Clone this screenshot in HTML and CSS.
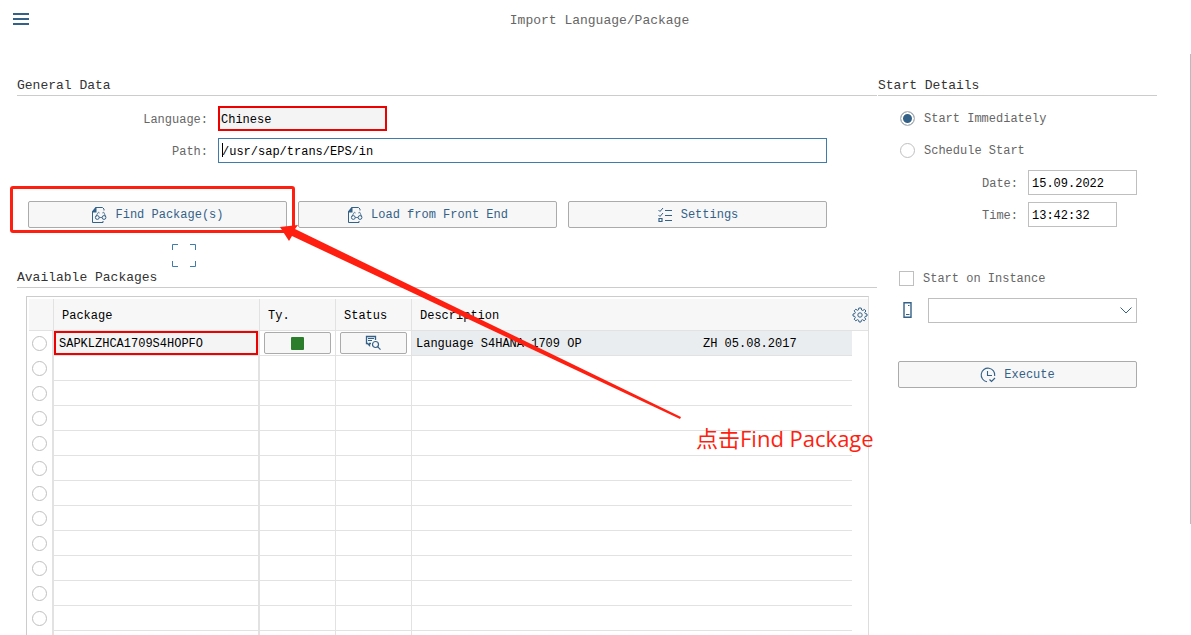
FILE: index.html
```html
<!DOCTYPE html>
<html lang="en">
<head>
<meta charset="utf-8">
<title>Import Language/Package</title>
<link rel="stylesheet" href="styles.css">
</head>
<body>
<svg class="defs" aria-hidden="true">
  <symbol id="doc-find" viewBox="0 0 16 16">
    <path d="M1.500 4.500V15.500H12V14M5 .5H11.500L13 2V3.500" fill="none" stroke="#346187"/>
    <path d="M1 5.500V4.500L4.500 0H5.500V5.500Z" fill="#346187"/>
    <circle cx="6.300" cy="10.500" r="1.900" fill="none" stroke="#346187"/>
    <circle cx="13" cy="10.500" r="1.900" fill="none" stroke="#346187"/>
    <path d="M8.200 10.500H11.100M4.700 9.500L7.500 5.200L8.600 6M14.700 9.500L12.700 5.200L11.300 6" fill="none" stroke="#346187" stroke-width=".8"/>
  </symbol>
</svg>
<header class="topbar">
  <button class="menu" aria-label="Menu"><span></span><span></span><span></span></button>
  <h1>Import Language/Package</h1>
</header>
<main class="content">
  <div class="left">
    <section>
      <h2>General Data</h2>
      <div class="fields">
        <div class="field">
          <label for="lang">Language:</label>
          <input id="lang" class="marked" value="Chinese" readonly>
        </div>
        <div class="field">
          <label for="path">Path:</label>
          <span class="path-box"><input id="path" value="/usr/sap/trans/EPS/in"></span>
        </div>
      </div>
      <div class="actions">
        <div class="callout"><button class="btn"><svg class="icon"><use href="#doc-find"/></svg>Find Package(s)</button></div>
        <button class="btn"><svg class="icon"><use href="#doc-find"/></svg>Load from Front End</button>
        <button class="btn"><svg class="icon" viewBox="0 0 16 16" fill="none" stroke="#346187"><path d="M1.500 3L3 4.500L6 1M1.500 8L3 9.500L6 6" stroke-width="1"/><path d="M2 11.500H5V14.500H2Z" stroke-width="1.200"/><path d="M8 3.500H15M8 8.500H15M8 13.500H15"/></svg>Settings</button>
      </div>
      <svg class="focus" viewBox="0 0 24 23" fill="none" stroke="#3f7cac"><path d="M.5 6V.5H6M18 .5H23.500V6M.5 17V22.500H6M18 22.500H23.500V17"/></svg>
    </section>
    <section class="packages">
      <h2>Available Packages</h2>
      <div class="grid">
        <table>
          <colgroup><col class="c-sel"><col class="c-pkg"><col class="c-btn"><col class="c-btn"><col><col class="c-gear"></colgroup>
          <thead>
            <tr><th></th><th>Package</th><th>Ty.</th><th>Status</th><th>Description</th>
            <th class="gear"><button aria-label="Table settings"><svg viewBox="0 0 16 16" fill="none" stroke="#346187"><path d="M6.800 1H9.200L9.600 3L10.800 3.500L12.500 2.400L13.900 4L12.700 5.500L13.200 6.600L15 7V9L13.200 9.400L12.700 10.600L13.800 12.200L12.200 13.800L10.600 12.700L9.400 13.200L9 15H7L6.600 13.200L5.400 12.700L3.800 13.800L2.200 12.200L3.300 10.600L2.800 9.400L1 9V7L2.800 6.600L3.300 5.400L2.200 3.800L3.800 2.200L5.400 3.300L6.500 2.800Z"/><circle cx="8" cy="8" r="2.200"/></svg></button></th></tr>
          </thead>
          <tbody>
            <tr class="first">
              <td><input type="radio" name="row" aria-label="Row 1"></td>
              <td><div class="pkg">SAPKLZHCA1709S4HOPFO</div></td>
              <td class="cell-btn"><button class="btn" aria-label="Type"><span class="green"></span></button></td>
              <td class="cell-btn"><button class="btn" aria-label="Status"><svg class="icon" viewBox="0 0 16 16" fill="none" stroke="#346187"><path d="M6 8.500H4.500V10.500L2.500 8.500H1.500V1.500H10.500V5" stroke-width="1.300"/><path d="M3 3.500H9M3 5.500H7"/><circle cx="10.500" cy="9.500" r="3" stroke-width="1.200"/><path d="M12.600 11.700L15.500 14.700" stroke-width="1.200"/></svg></button></td>
              <td class="desc"><div><span>Language S4HANA 1709 OP</span><span>ZH 05.08.2017</span></div></td><td></td>
            </tr>
            <tr><td><input type="radio" name="row" aria-label="Row 2"></td><td></td><td></td><td></td><td></td><td></td></tr>
            <tr><td><input type="radio" name="row" aria-label="Row 3"></td><td></td><td></td><td></td><td></td><td></td></tr>
            <tr><td><input type="radio" name="row" aria-label="Row 4"></td><td></td><td></td><td></td><td></td><td></td></tr>
            <tr><td><input type="radio" name="row" aria-label="Row 5"></td><td></td><td></td><td></td><td></td><td></td></tr>
            <tr><td><input type="radio" name="row" aria-label="Row 6"></td><td></td><td></td><td></td><td></td><td></td></tr>
            <tr><td><input type="radio" name="row" aria-label="Row 7"></td><td></td><td></td><td></td><td></td><td></td></tr>
            <tr><td><input type="radio" name="row" aria-label="Row 8"></td><td></td><td></td><td></td><td></td><td></td></tr>
            <tr><td><input type="radio" name="row" aria-label="Row 9"></td><td></td><td></td><td></td><td></td><td></td></tr>
            <tr><td><input type="radio" name="row" aria-label="Row 10"></td><td></td><td></td><td></td><td></td><td></td></tr>
            <tr><td><input type="radio" name="row" aria-label="Row 11"></td><td></td><td></td><td></td><td></td><td></td></tr>
            <tr><td><input type="radio" name="row" aria-label="Row 12"></td><td></td><td></td><td></td><td></td><td></td></tr>
            <tr><td></td><td></td><td></td><td></td><td></td><td></td></tr>
          </tbody>
        </table>
      </div>
    </section>
    <svg class="arrow" viewBox="0 0 402 196"><path d="M0 2L18 0L15 4L401 192L400 194L12 11L9 16Z" fill="#ff1f10"/></svg>
    <p class="note">点击Find Package</p>
  </div>
  <section class="right">
    <h2>Start Details</h2>
    <div class="start">
      <label class="choice"><input type="radio" name="start" checked>Start Immediately</label>
      <label class="choice"><input type="radio" name="start">Schedule Start</label>
      <div class="when"><label for="date">Date:</label><input id="date" value="15.09.2022"></div>
      <div class="when"><label for="time">Time:</label><input id="time" class="short" value="13:42:32"></div>
      <label class="choice instance"><input type="checkbox">Start on Instance</label>
      <div class="server">
        <svg viewBox="0 0 9 16" fill="none" stroke="#346187"><path d="M1 .8H8V15.200H1Z" stroke-width="1.400"/><path d="M5 3.500H6.500M3 12.500H6.500"/></svg>
        <select aria-label="Instance"><option></option></select>
      </div>
      <button class="btn execute"><svg class="icon" viewBox="0 0 16 16" fill="none" stroke="#346187"><path d="M7 14.700A6.800 6.800 0 1 1 14.700 9M7.500 4V8.500H12" stroke-width="1.100"/><path d="M9.500 12.500L11.500 14.500L15 11" stroke-width="1.200"/></svg>Execute</button>
    </div>
  </section>
  <div class="edge"></div>
</main>
</body>
</html>
```
FILE: styles.css
```css
* { box-sizing: border-box; }
body {
  margin: 0;
  height: 100vh;
  display: flex;
  flex-direction: column;
  overflow: hidden;
  background: #fff;
  color: #000;
  font: 12px/16px "Liberation Mono", "Noto Sans CJK SC", monospace;
}
button, input, select { font: inherit; color: inherit; margin: 0; }
h1, h2, p { margin: 0; font-weight: normal; }
.defs { display: none; }

.topbar {
  flex: none;
  display: grid;
  grid-template-columns: 16px 1fr 16px;
  align-items: center;
  height: 38px;
  padding: 0 5px 0 13px;
}
.menu {
  display: flex;
  flex-direction: column;
  gap: 3px;
  padding: 0;
  border: 0;
  background: none;
}
.menu span { height: 2px; width: 16px; background: #346187; }
h1 { padding-top: 3px; font-size: 13px; line-height: 20px; text-align: center; color: #666; }

.content {
  flex: 1;
  min-height: 0;
  display: flex;
  gap: 1px;
  padding: 38px 0 0 17px;
}
.left {
  position: relative;
  flex: 1;
  min-width: 0;
  display: flex;
  flex-direction: column;
}
h2 {
  height: 20px;
  font-size: 13px;
  line-height: 19px;
  color: #333;
  border-bottom: 1px solid #ccc;
}

.fields { padding: 10px 50px 0 0; }
.field {
  display: grid;
  grid-template-columns: 191px 1fr;
  column-gap: 10px;
  align-items: start;
  height: 32px;
}
.field label, .when label { line-height: 28px; text-align: right; color: #666; }
.field input, .when input {
  height: 25px;
  padding: 2px 3px 0;
  border: 1px solid #bfbfbf;
  border-radius: 0;
  background: #fff;
  outline: 0;
}
.field .marked { width: 169px; padding: 2px 1px 0; border: 2px solid #ec0000; background: #f4f4f4; }
.path-box { position: relative; display: flex; }
.field .path-box input { flex: 1; min-width: 0; border-color: #3f7cac; }
.path-box::before {
  content: "";
  position: absolute;
  left: 4px;
  top: 5px;
  width: 1px;
  height: 14px;
  background: #000;
}

.actions {
  display: grid;
  grid-template-columns: repeat(3, 1fr);
  gap: 11px;
  padding: 31px 50px 0 11px;
}
.btn {
  display: flex;
  align-items: center;
  justify-content: center;
  gap: 8px;
  width: 100%;
  height: 27px;
  padding: 0;
  border: 1px solid #ababab;
  border-radius: 2px;
  background: #f7f7f7;
  color: #346187;
}
.icon { width: 16px; height: 16px; flex: none; }
.callout { position: relative; }
.callout::after {
  content: "";
  position: absolute;
  inset: -15px -8px -5px -18px;
  border: 3px solid #ff1f10;
  border-radius: 3px;
}
.focus { display: block; width: 24px; height: 23px; margin: 16px 0 0 155px; }

.packages {
  flex: 1;
  min-height: 0;
  display: flex;
  flex-direction: column;
  padding-top: 1px;
}
.packages h2 { flex: none; }
.grid {
  flex: 1;
  min-height: 0;
  overflow: hidden;
  margin: 8px 8px 0 9px;
  padding: 2px 0 0 2px;
  border: 1px solid #ccc;
  border-right-color: #ddd;
  border-bottom: 0;
}
table { width: 100%; table-layout: fixed; border-collapse: separate; border-spacing: 0; }
.c-sel { width: 25px; }
.c-pkg { width: 206px; }
.c-btn { width: 76px; }
.c-gear { width: 16px; }
th {
  height: 32px;
  padding: 2px 8px 0;
  font-weight: normal;
  text-align: left;
  background: #f7f7f7;
}
th, td { border-right: 1px solid #e2e2e2; border-bottom: 1px solid #e2e2e2; }
td { height: 25px; padding: 0; }
th:first-child, td:first-child { padding: 0; }
td:first-child, td:nth-child(2) { border-right-width: 2px; }
td:first-child { padding-right: 2px; border-bottom: 0; text-align: center; line-height: 0; }
th:nth-child(5), td:nth-child(5), th:last-child, td:last-child { border-right: 0; }
td:last-child { border-bottom: 0; }
.gear { padding: 0; }
.gear button { display: flex; padding: 0; border: 0; background: none; }
.gear svg { width: 16px; height: 16px; }
.pkg { height: 24px; padding: 0 3px; line-height: 22px; background: #f4f4f4; border: 2px solid #ec0000; }
.cell-btn .btn { width: 67px; height: 22px; margin: 0 auto; }
.cell-btn { padding-right: 1px; }
.green { width: 13px; height: 13px; border-radius: 1px; background: #2b7c2b; }
.desc { padding: 1px 0 0 4px; background: #eaedef; }
.desc div { display: grid; grid-template-columns: 287px 1fr; }

input[type="radio"], input[type="checkbox"] {
  appearance: none;
  width: 15px;
  height: 15px;
  border: 1px solid #bfbfbf;
  background: #fff;
  flex: none;
}
input[type="radio"] { border-radius: 50%; }
input[type="radio"]:checked { background: #346187; box-shadow: inset 0 0 0 2px #fff; }

.arrow { position: absolute; left: 263px; top: 149px; width: 402px; height: 196px; }
.note {
  position: absolute;
  left: 679px;
  top: 348px;
  font: 22px/28px "Open Sans", "Noto Sans CJK SC", sans-serif;
  color: #ff1f10;
  white-space: nowrap;
}

.right { flex: 0 0 279px; }
.start { padding: 7px 20px 0 20px; }
.choice { display: flex; align-items: center; gap: 9px; height: 31px; margin-bottom: 1px; padding-left: 2px; color: #666; }
.when {
  display: grid;
  grid-template-columns: 120px 109px;
  column-gap: 10px;
  align-items: start;
  height: 32px;
  padding-top: 3px;
}
.when input { width: 100%; }
.when .short { width: 89px; }
.instance { margin-top: 32px; padding-left: 1px; }
.server { display: flex; align-items: start; gap: 16px; height: 32px; padding: 3px 0 0 5px; }
.server svg { width: 9px; height: 16px; margin-top: 4px; flex: none; }
select {
  flex: 1;
  height: 25px;
  appearance: none;
  border: 1px solid #bfbfbf;
  border-radius: 0;
  background: url("data:image/svg+xml,%3Csvg xmlns='http://www.w3.org/2000/svg' width='12' height='7' fill='none' stroke='%23346187'%3E%3Cpath d='M.5 .5L6 6L11.5 .5'/%3E%3C/svg%3E") no-repeat right 4px center #fff;
}
.execute { margin-top: 34px; }
.edge { flex: none; width: 1px; height: 470px; margin: -22px 0 0 32px; background: #bbb; }
```
